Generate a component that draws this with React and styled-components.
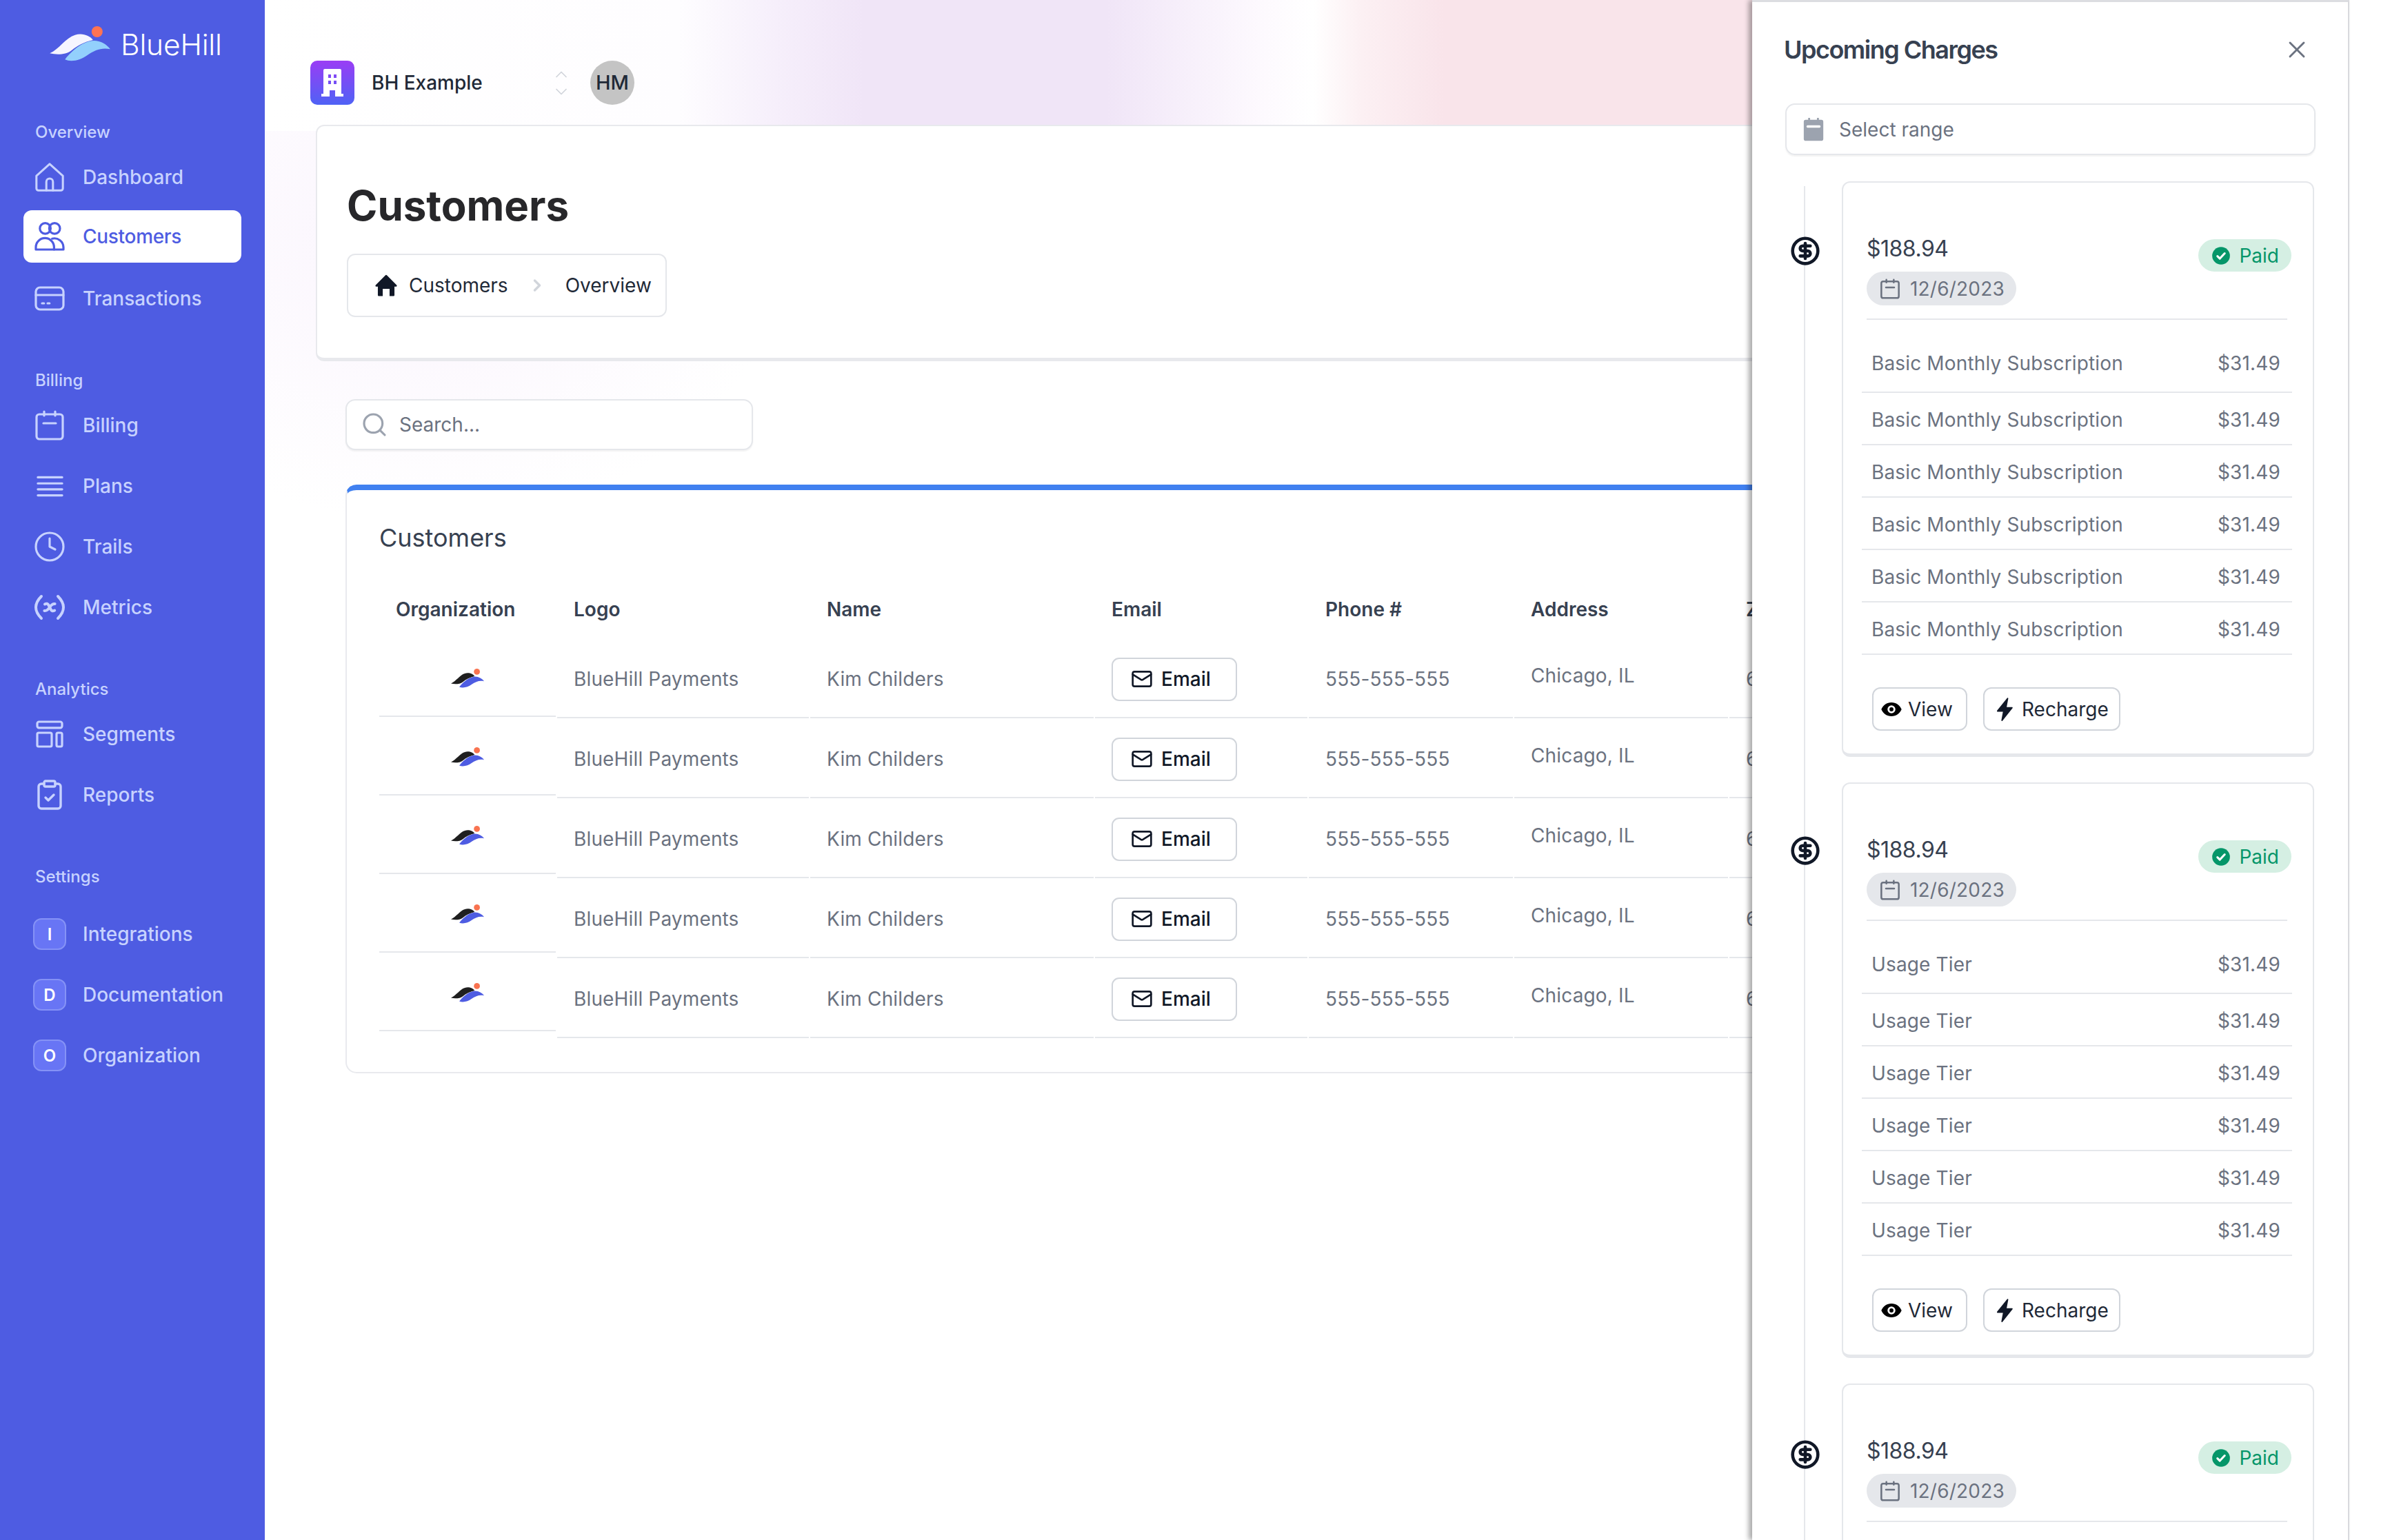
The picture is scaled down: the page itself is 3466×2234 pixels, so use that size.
import React from "react";
import styled, { createGlobalStyle } from "styled-components";
import { Clock, ClipboardCheck, Search, ChevronRight, ChevronUp, ChevronDown, Mail, X, CircleDollarSign } from "lucide-react";

const Global = createGlobalStyle`
  html, body { margin: 0; padding: 0; background: #fff; }
  * { box-sizing: border-box; }
  body { font-family: Inter, "Noto Sans", "Liberation Sans", sans-serif; font-size: 28px; color: #374151; }
`;

const Shell = styled.div`position: relative; display: flex; width: 3466px; height: 2234px; overflow: hidden;`;

const Sidebar = styled.aside`
  flex: 0 0 384px; height: 100%; background: #4e5ce2; padding-top: 38px; display: flex; flex-direction: column;
`;
const Brand = styled.div`display: flex; align-items: center; gap: 15px; padding-left: 72px; height: 51px; margin-bottom: 87px;`;
const BrandName = styled.span`font-size: 42.5px; font-weight: 300; color: #fff; line-height: 1; padding-top: 4px; letter-spacing: -0.2px;`;
const NavSection = styled.section`display: flex; flex-direction: column; margin-bottom: 65px;`;
const NavLabel = styled.div`
  font-size: 24px; font-weight: 500; line-height: 32px; color: #c7d2fe; padding-left: 51px; margin-bottom: ${p => p.$gap || 11}px;
`;
const NavList = styled.div`display: flex; flex-direction: column; gap: 12px;`;
const NavItem = styled.a`
  display: flex; align-items: center; gap: 24px; width: 316px; height: 76px; margin-left: 34px; padding-left: 14px; border-radius: 12px;
  font-size: 28px; font-weight: 500; color: ${p => p.$active ? "#4e5ce2" : "#c7d2fe"}; background: ${p => p.$active ? "#fff" : "transparent"};
  ${p => p.$active ? "margin-top: -2px; margin-bottom: 2px; letter-spacing: -0.3px;" : ""}
`;
const NavIcon = styled.span`flex: 0 0 48px; height: 48px; display: flex; align-items: center; justify-content: center; color: ${p => p.$active ? "#4e5ce2" : "#c7d2fe"};`;
const InitialBadge = styled.span`
  flex: 0 0 48px; height: 46px; display: flex; align-items: center; justify-content: center; border-radius: 12px;
  border: 2px solid #8592f6; background: #6875f5; color: #fff; font-size: 24px; font-weight: 600;
`;

const Main = styled.main`
  flex: 1; min-width: 0; height: 100%; position: relative; display: flex; flex-direction: column;
  background:
    linear-gradient(90deg, #ffffff 0, #fefdff 600px, #f6effb 740px, #f0e5f7 870px, #f0e5f7 1220px, #fdf9fe 1440px, #ffffff 1520px, #fcf0f3 1590px, #f9e4ea 1710px, #f9e4ea 2160px) 0 0 / 2160px 190px no-repeat,
    radial-gradient(520px 420px at 240px 340px, #faf4fd 0, #ffffff00 100%),
    #fff;
`;
const OrgBar = styled.div`display: flex; align-items: center; margin: 88px 0 29px 66px; height: 64px;`;
const OrgMark = styled.span`
  width: 64px; height: 64px; border-radius: 10px; display: flex; align-items: center; justify-content: center;
  background: linear-gradient(180deg, #9a3df5 0%, #4f62f5 100%); color: #fff;
`;
const OrgName = styled.span`width: 288px; padding-left: 25px; font-size: 28px; font-weight: 500; color: #1f2937; white-space: nowrap;`;
const OrgChevrons = styled.span`
  display: flex; flex-direction: column; align-items: center; width: 24px; color: #d1d5db;
  svg + svg { margin-top: -3px; }
`;
const Avatar = styled.span`
  width: 64px; height: 64px; margin-left: 30px; padding-bottom: 2px; border-radius: 50%; background: #c4c4c4; color: #1f2937;
  display: flex; align-items: center; justify-content: center; font-size: 29px; font-weight: 500;
`;
const PageHeader = styled.header`
  width: 2740px; height: 343px; margin-left: 74px; padding: 79px 0 0 43px; background: #fff; border: 2px solid #e8e9ed; border-bottom-width: 5px; border-radius: 12px;
`;
const PageTitle = styled.h1`margin: 0 0 34px; font-size: 60px; line-height: 72px; font-weight: 700; color: #27272a;`;
const Breadcrumb = styled.nav`
  display: inline-flex; align-items: center; height: 92px; padding: 0 20px 0 38px; background: #fff; border: 2px solid #e5e7eb; border-radius: 12px; color: #1f2937;
`;
const CrumbIcon = styled.span`display: flex; margin-right: 16px; color: #111827;`;
const CrumbSep = styled.span`display: flex; margin: 0 27px 0 28px; color: #d1d5db;`;
const SearchBox = styled.div`
  display: flex; align-items: center; gap: 16px; width: 591px; height: 74px; margin: 55px 0 0 117px; padding-left: 20px; background: #fff;
  border: 2px solid #e5e7eb; border-radius: 14px; box-shadow: 0 2px 2px #0000000d; color: #6b7280;
`;
const SearchIconWrap = styled.span`display: flex; color: #9ca3af;`;
const TableCard = styled.section`
  width: 2698px; height: 854px; margin: 50px 0 0 117px; padding: 45px 0 0 47px; background: #fff; border: 2px solid #e9eaee; border-top: 8px solid #4080f0; border-radius: 16px;
`;
const TableTitle = styled.h2`margin: 0 0 38px; font-size: 36px; line-height: 48px; font-weight: 400; color: #374151;`;
const Table = styled.div`display: flex; gap: 2px;`;
const Column = styled.div`flex: 0 0 ${p => p.$width}px;`;
const HeadCell = styled.div`height: 84px; display: flex; align-items: center; padding-left: 24px; font-size: 28px; font-weight: 600; color: #374151; white-space: nowrap;`;
const Cell = styled.div`
  height: ${p => p.$height || 116}px; display: flex; align-items: center; padding-left: 24px; padding-top: 4px; padding-bottom: ${p => p.$lift || 0}px;
  border-bottom: 2px solid #e5e7eb; color: #6b7280; white-space: nowrap; letter-spacing: 0.15px; ${p => p.$center ? "justify-content: center; padding-left: 0;" : ""}
`;
const EmailButton = styled.button`
  display: flex; align-items: center; gap: 12px; width: 182px; height: 63px; padding: 0 0 0 26px; background: #fff; border: 2px solid #d1d5db; border-radius: 11px;
  font: 500 28px Inter, sans-serif; color: #111827;
`;

const Panel = styled.aside`
  position: absolute; left: 2541px; top: 0; width: 866px; height: 2234px; padding: 0 0 0 46px; background: #fff;
  border-top: 3px solid #dcdde1; border-right: 2px solid #d8d9dd; box-shadow: -5px 0 7px #00000055;
`;
const PanelHead = styled.div`display: flex; align-items: center; justify-content: space-between; height: 70px; margin: 34px 0 43px; padding-right: 54px;`;
const PanelTitle = styled.h2`margin: 0; font-size: 36px; font-weight: 600; color: #374151; letter-spacing: -1.5px;`;
const CloseIcon = styled.span`display: flex; color: #6b7280;`;
const RangeField = styled.div`
  display: flex; align-items: center; gap: 20px; width: 769px; height: 75px; margin-left: 2px; padding-left: 22px; border: 2px solid #e5e7eb; border-radius: 14px; box-shadow: 0 2px 2px #0000000d; color: #6b7280;
`;
const RangeIcon = styled.span`display: flex; color: #9ca3af;`;
const Timeline = styled.div`
  position: relative; display: flex; flex-direction: column; gap: 37px; margin-top: 38px; margin-left: 2px;
  &::before { content: ""; position: absolute; left: 27px; top: 7px; bottom: -400px; width: 2px; background: #e5e7eb; }
`;
const Entry = styled.div`display: flex; align-items: flex-start;`;
const EntryDot = styled.span`position: relative; flex: 0 0 58px; margin-right: 24px; margin-top: ${p => p.$top}px; display: flex; justify-content: center; color: #111827;`;
const Charge = styled.article`
  flex: 0 0 683px; height: 835px; background: #fff; padding: 76px 30px 0 34px; border: 2px solid #e5e7eb; border-bottom-width: 5px; border-radius: 12px;
`;
const ChargeTop = styled.div`display: flex; justify-content: space-between; align-items: flex-start;`;
const ChargeInfo = styled.div`display: flex; flex-direction: column; align-items: flex-start; gap: 13px;`;
const Amount = styled.span`font-size: 32px; line-height: 40px; color: #374151; letter-spacing: -0.5px;`;
const DateChip = styled.span`
  display: flex; align-items: center; gap: 13px; height: 49px; padding: 0 17px 0 18px; border-radius: 25px; background: #e5e7eb; color: #6b7280; letter-spacing: 0.2px;
`;
const PaidChip = styled.span`
  display: flex; align-items: center; gap: 12px; height: 47px; margin-top: 6px; margin-right: 1px; padding: 0 18px 0 19px; border-radius: 24px; background: #d5efe3; color: #059669;
`;
const Divider = styled.hr`width: 610px; height: 2px; margin: 19px 0 0; border: 0; background: #e5e7eb;`;
const Lines = styled.div`margin: 0 0 0 -7px; width: 624px;`;
const LineRow = styled.div`
  display: flex; align-items: center; justify-content: space-between; height: ${p => p.$first ? 106 : 76}px; padding: ${p => p.$first ? 22 : 3}px 17px 0 14px;
  border-bottom: 2px solid #e5e7eb; color: #6b7280; letter-spacing: 0.15px;
`;
const Actions = styled.div`display: flex; gap: 23px; margin: 47px 0 0 8px;`;
const ActionButton = styled.button`
  display: flex; align-items: center; gap: ${p => p.$gap}px; width: ${p => p.$width}px; height: 63px; padding: 0 0 0 ${p => p.$pad}px; background: #fff; border: 2px solid #d1d5db; border-radius: 12px;
  font: 400 28px Inter, sans-serif; color: #1f2937;
`;

const Stroke = ({ size = 48, children, w = 1.6 }) => (
  <svg width={size} height={size} viewBox="0 0 24 24" fill="none" stroke="currentColor" strokeWidth={w} strokeLinecap="round" strokeLinejoin="round">{children}</svg>
);
const HomeIcon = () => (
  <Stroke size={46}>
    <path d="M12 2 2 11v9.500A1.500 1.500 0 0 0 3.500 22h17a1.500 1.500 0 0 0 1.500-1.500V11z" />
    <path d="M9.500 22v-6.500a2.500 2.500 0 0 1 5 0V22" />
  </Stroke>
);
const UsersIcon = () => (
  <Stroke>
    <circle cx="8.800" cy="6.200" r="3.900" /><circle cx="15.600" cy="6.200" r="3.900" />
    <path d="M2 21.500v-1.700a6.600 6.600 0 0 1 13.200 0v1.700z" /><path d="M13.800 13.600a6.600 6.600 0 0 1 8.200 6.200v1.700h-6.800" />
  </Stroke>
);
const CardIcon = () => (
  <Stroke><rect x="2" y="4" width="20" height="16" rx="3" /><path d="M2 9.500h20" /><path d="M6.500 15.500h1.400M10.500 15.500h1.400" /></Stroke>
);
const CalendarIcon = ({ size = 48, w = 1.6 }) => (
  <Stroke size={size} w={w}><rect x="2.500" y="4" width="19" height="18" rx="2" /><path d="M8 2v3M16 2v3M7.500 10.500h9" /></Stroke>
);
const LinesIcon = () => (<Stroke size={47}><path d="M3 5.300h18M3 9.800h18M3 14.200h18M3 18.700h18" /></Stroke>);
const ClockIcon = () => (<Clock size={48} strokeWidth={1.600} />);
const MetricsIcon = () => (
  <Stroke w={2}>
    <path d="M6 4C3.300 6.700 2 9.300 2 12s1.300 5.300 4 8" /><path d="M18 4c2.700 2.700 4 5.300 4 8s-1.300 5.300-4 8" />
    <path d="M8.500 9.700c1.200-.7 2.200-.4 2.800.8l1.500 3c.6 1.200 1.600 1.500 2.800.8" /><path d="M15.800 9.500c-1.500-.2-2.500.5-3.800 2.500s-2.300 2.700-3.800 2.500" />
  </Stroke>
);
const SegmentsIcon = () => (
  <Stroke><rect x="3" y="3" width="18" height="4.400" rx="1.300" /><rect x="3" y="11" width="10.500" height="10" rx="1" /><rect x="17" y="11" width="4" height="10" rx="1" /></Stroke>
);
const BuildingIcon = () => (
  <svg width="32" height="40" viewBox="0 0 32 40" fill="currentColor">
    <path fillRule="evenodd" d="M5 0h22a2 2 0 0 1 2 2v34h3v4H20v-9h-8v9H0v-4h3V2a2 2 0 0 1 2-2zm5 8v5h4V8zm8 0v5h4V8zm-8 9v5h4v-5zm8 0v5h4v-5z" />
  </svg>
);
const HomeSolid = () => (
  <svg width="34" height="34" viewBox="0 0 24 24" fill="currentColor">
    <path d="M11.300 1.600a1 1 0 0 1 1.400 0l10 10a1 1 0 0 1-.7 1.700h-1.500V22a1 1 0 0 1-1 1h-4v-7.500H8.500V23h-4a1 1 0 0 1-1-1v-8.700H2a1 1 0 0 1-.7-1.700z" />
  </svg>
);
const CalendarSolid = () => (
  <svg width="34" height="34" viewBox="0 0 24 24" fill="currentColor">
    <path fillRule="evenodd" d="M6.500 0.500a1 1 0 0 1 2 0V2h7V0.500a1 1 0 0 1 2 0V2H20a2 2 0 0 1 2 2v17.500a2 2 0 0 1-2 2H4a2 2 0 0 1-2-2V4a2 2 0 0 1 2-2h2.500zM6 7.500a1 1 0 0 0 0 2.500h12a1 1 0 0 0 0-2.500z" />
  </svg>
);
const EyeSolid = () => (
  <svg width="32" height="32" viewBox="0 0 24 24" fill="#000">
    <path fillRule="evenodd" d="M12 4.500c5 0 9.300 3.100 11 7.500-1.700 4.400-6 7.500-11 7.500S2.700 16.400 1 12c1.700-4.400 6-7.500 11-7.500zm0 3.200a4.300 4.300 0 1 0 0 8.600 4.300 4.300 0 0 0 0-8.600zm0 2.100a2.200 2.200 0 1 1 0 4.400 2.200 2.200 0 0 1 0-4.400z" />
  </svg>
);
const BoltSolid = () => (
  <svg width="26" height="34" viewBox="0 0 16 22" fill="#111827">
    <path d="M10.500.3 1 12.200c-.3.400 0 1 .5 1h5L5 21.300c-.1.600.6.900 1 .5l9.500-11.900c.3-.4 0-1-.5-1h-5l1.500-8.100c.1-.6-.6-.9-1-.5z" />
  </svg>
);
const CheckSolid = () => (
  <svg width="28" height="28" viewBox="0 0 24 24">
    <circle cx="12" cy="12" r="11" fill="#059669" />
    <path d="M7.500 12.500l3 3 6-6.500" fill="none" stroke="#fff" strokeWidth="2.600" strokeLinecap="round" strokeLinejoin="round" />
  </svg>
);
const LogoMark = ({ hill, wave, sun, width, height }) => (
  <svg width={width} height={height} viewBox="0 0 263 153">
    <path d="M0 118C40 100 70 50 110 38C140 28 175 40 188 60C150 68 120 85 95 105C70 125 30 125 0 118Z" fill={hill} />
    <path d="M66 145C85 118 130 75 175 65C210 57 245 75 263 100C225 92 195 105 165 125C135 147 95 158 66 145Z" fill={wave} />
    <circle cx="206" cy="24" r="24" fill={sun} />
  </svg>
);

const overview = [
  { label: "Dashboard", icon: <HomeIcon /> },
  { label: "Customers", icon: <UsersIcon />, active: true },
  { label: "Transactions", icon: <CardIcon /> },
];
const billing = [
  { label: "Billing", icon: <CalendarIcon /> },
  { label: "Plans", icon: <LinesIcon /> },
  { label: "Trails", icon: <ClockIcon /> },
  { label: "Metrics", icon: <MetricsIcon /> },
];
const analytics = [
  { label: "Segments", icon: <SegmentsIcon /> },
  { label: "Reports", icon: <ClipboardCheck size={48} strokeWidth={1.700} /> },
];
const settings = ["Integrations", "Documentation", "Organization"];

const Nav = ({ title, items }) => (
  <NavSection>
    <NavLabel>{title}</NavLabel>
    <NavList>
      {items.map(i => (
        <NavItem key={i.label} $active={i.active}>
          <NavIcon $active={i.active}>{i.icon}</NavIcon>{i.label}
        </NavItem>
      ))}
    </NavList>
  </NavSection>
);

const rowIdx = [0, 1, 2, 3, 4];
const textColumns = [
  { head: "Logo", width: 365, value: "BlueHill Payments" },
  { head: "Name", width: 411, value: "Kim Childers" },
];
const ChargeCard = ({ label, top }) => (
  <Entry>
    <EntryDot $top={top}><CircleDollarSign size={44} strokeWidth={2.500} fill="#fff" /></EntryDot>
    <Charge>
      <ChargeTop>
        <ChargeInfo>
          <Amount>$188.94</Amount>
          <DateChip><CalendarIcon size={32} w={1.900} />12/6/2023</DateChip>
        </ChargeInfo>
        <PaidChip><CheckSolid />Paid</PaidChip>
      </ChargeTop>
      <Divider />
      <Lines>
        {[0, 1, 2, 3, 4, 5].map(i => (
          <LineRow key={i} $first={i === 0}><span>{label}</span><span>$31.49</span></LineRow>
        ))}
      </Lines>
      <Actions>
        <ActionButton $width={138} $pad={10} $gap={8}><EyeSolid />View</ActionButton>
        <ActionButton $width={199} $pad={16} $gap={12}><BoltSolid />Recharge</ActionButton>
      </Actions>
    </Charge>
  </Entry>
);

export default function App() {
  return (
    <Shell>
      <Global />
      <Sidebar>
        <Brand>
          <LogoMark hill="#f5f5ff" wave="#93d0fc" sun="#ff7352" width={88} height={51} />
          <BrandName>BlueHill</BrandName>
        </Brand>
        <Nav title="Overview" items={overview} />
        <Nav title="Billing" items={billing} />
        <Nav title="Analytics" items={analytics} />
        <NavSection>
          <NavLabel $gap={29}>Settings</NavLabel>
          <NavList>
            {settings.map(s => (
              <NavItem key={s}><InitialBadge>{s[0]}</InitialBadge>{s}</NavItem>
            ))}
          </NavList>
        </NavSection>
      </Sidebar>
      <Main>
        <OrgBar>
          <OrgMark><BuildingIcon /></OrgMark>
          <OrgName>BH Example</OrgName>
          <OrgChevrons><ChevronUp size={28} strokeWidth={1.500} /><ChevronDown size={28} strokeWidth={1.500} /></OrgChevrons>
          <Avatar>HM</Avatar>
        </OrgBar>
        <PageHeader>
          <PageTitle>Customers</PageTitle>
          <Breadcrumb>
            <CrumbIcon><HomeSolid /></CrumbIcon>Customers
            <CrumbSep><ChevronRight size={28} strokeWidth={3} /></CrumbSep>Overview
          </Breadcrumb>
        </PageHeader>
        <SearchBox><SearchIconWrap><Search size={40} strokeWidth={1.900} /></SearchIconWrap>Search...</SearchBox>
        <TableCard>
          <TableTitle>Customers</TableTitle>
          <Table>
            <Column $width={256}>
              <HeadCell>Organization</HeadCell>
              {rowIdx.map(i => (
                <Cell key={i} $height={114} $center><LogoMark hill="#1f1f1f" wave="#4e5ce2" sun="#f97350" width={48} height={28} /></Cell>
              ))}
            </Column>
            {textColumns.map(c => (
              <Column key={c.head} $width={c.width}>
                <HeadCell>{c.head}</HeadCell>
                {rowIdx.map(i => <Cell key={i}>{c.value}</Cell>)}
              </Column>
            ))}
            <Column $width={308}>
              <HeadCell>Email</HeadCell>
              {rowIdx.map(i => (
                <Cell key={i}><EmailButton><Mail size={32} color="#111827" strokeWidth={2} />Email</EmailButton></Cell>
              ))}
            </Column>
            <Column $width={296}>
              <HeadCell>Phone #</HeadCell>
              {rowIdx.map(i => <Cell key={i}>555-555-555</Cell>)}
            </Column>
            <Column $width={310}>
              <HeadCell>Address</HeadCell>
              {rowIdx.map(i => <Cell key={i} $lift={10}>Chicago, IL</Cell>)}
            </Column>
            <Column $width={300}>
              <HeadCell>Zip</HeadCell>
              {rowIdx.map(i => <Cell key={i}>60601</Cell>)}
            </Column>
          </Table>
        </TableCard>
      </Main>
      <Panel>
        <PanelHead>
          <PanelTitle>Upcoming Charges</PanelTitle>
          <CloseIcon><X size={40} strokeWidth={1.700} /></CloseIcon>
        </PanelHead>
        <RangeField><RangeIcon><CalendarSolid /></RangeIcon>Select range</RangeField>
        <Timeline>
          <ChargeCard label="Basic Monthly Subscription" top={79} />
          <ChargeCard label="Usage Tier" top={77} />
          <ChargeCard label="Basic Monthly Subscription" top={81} />
        </Timeline>
      </Panel>
    </Shell>
  );
}
